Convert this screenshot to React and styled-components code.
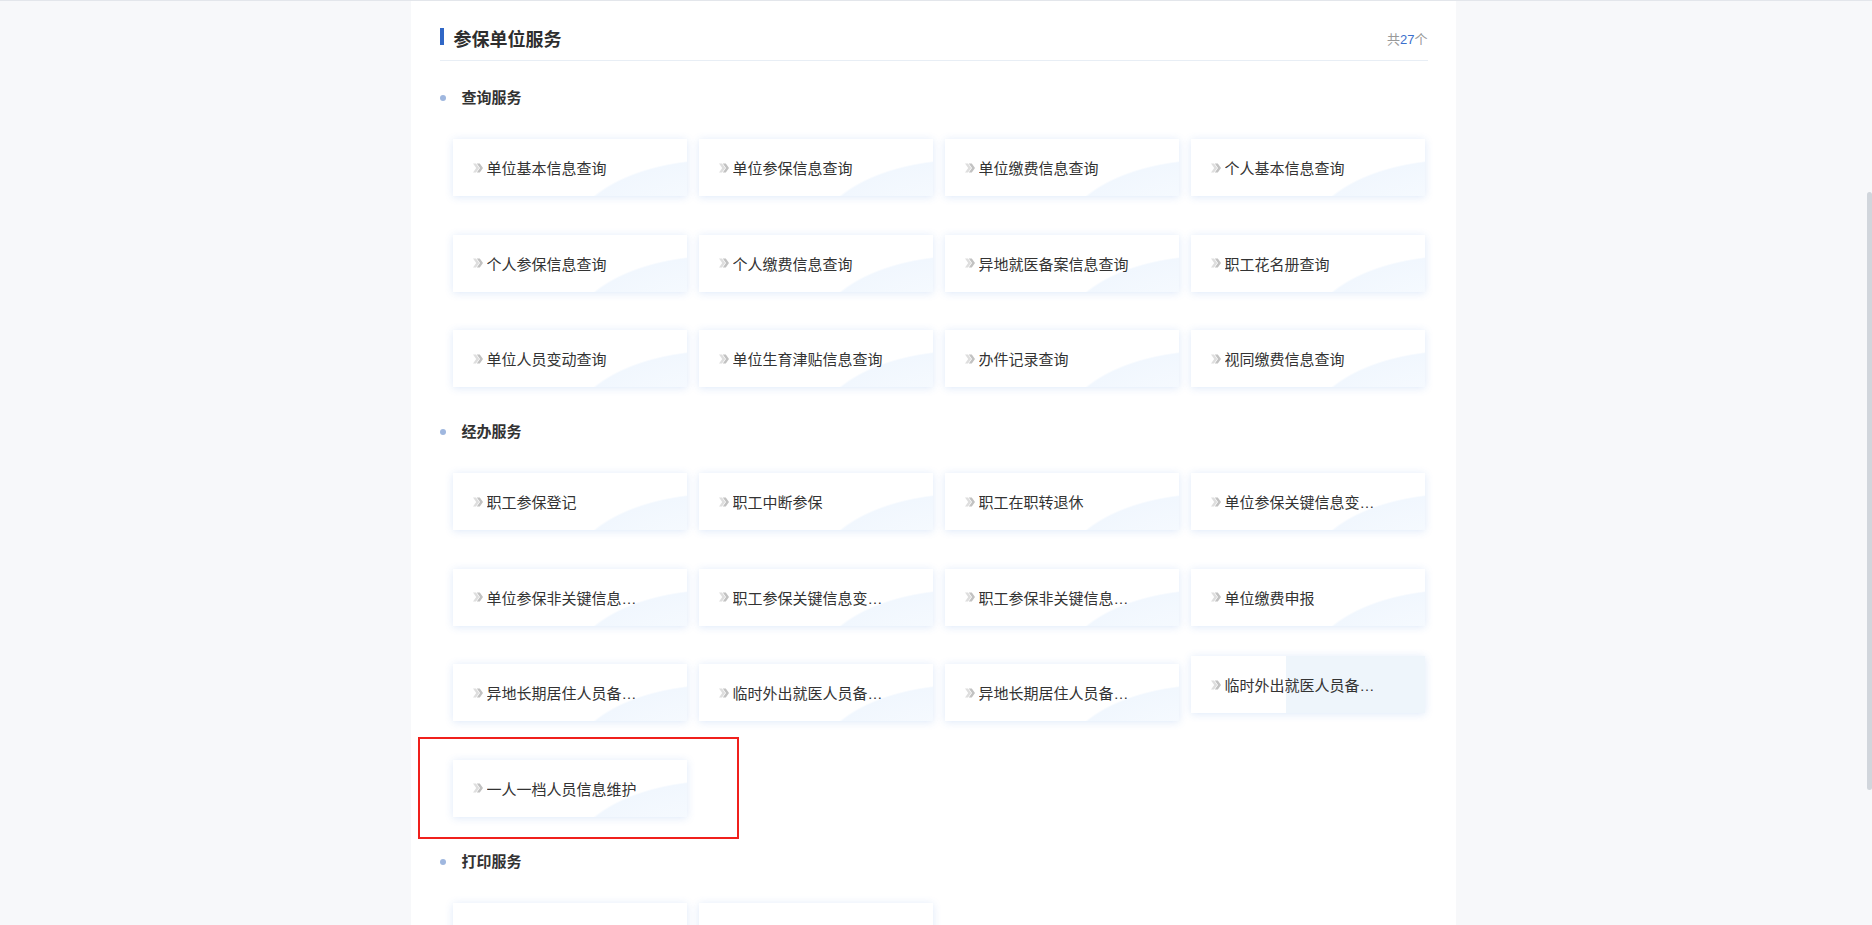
import React from "react"
import styled, { createGlobalStyle, css } from "styled-components"

const GlobalStyle = createGlobalStyle`
  html, body {
    margin: 0;
    height: 100%;
    overflow: hidden;
  }
  body {
    background: #f7f8fa;
    border-top: 1px solid #e3e6eb;
    font-family: "Liberation Sans", "Noto Sans CJK SC", sans-serif;
    color: #333;
  }
`

const Page = styled.div`
  padding-right: 6px;
`

const Panel = styled.main`
  width: 1045px;
  min-height: 100vh;
  margin: 0 auto;
  padding: 0 28px 0 29px;
  box-sizing: border-box;
  background: #fff;
`

const Header = styled.header`
  height: 60px;
  box-sizing: border-box;
  padding-top: 27px;
  display: flex;
  justify-content: space-between;
  align-items: flex-start;
  border-bottom: 1px solid #e8eef5;
`

const Title = styled.h2`
  margin: 0;
  display: flex;
  align-items: flex-start;
  gap: 10px;
  font-size: 18px;
  line-height: 24px;
  font-weight: bold;
  color: #2e2e2e;

  &::before {
    content: "";
    width: 4px;
    height: 17px;
    background: #3067c6;
    flex-shrink: 0;
  }
`

const Count = styled.span`
  font-size: 13px;
  line-height: 24px;
  color: #999;

  b {
    font-weight: normal;
    color: #3b6fcd;
  }
`

const Body = styled.div`
  padding-top: 27px;
`

const Section = styled.section`
  & + & {
    margin-top: 35px;
  }
`

const SectionTitle = styled.h3`
  margin: 0;
  display: flex;
  align-items: center;
  font-size: 15px;
  line-height: 20px;
  font-weight: bold;
  color: #333;

  &::before {
    content: "";
    width: 6px;
    height: 6px;
    border-radius: 50%;
    background: #9fb7df;
    margin-right: 16px;
  }
`

const Grid = styled.div`
  margin-top: 31px;
  padding-left: 13px;
  display: grid;
  grid-template-columns: repeat(4, 234px);
  column-gap: 12px;
  row-gap: 38.5px;
`

const Card = styled.a`
  position: relative;
  height: 57px;
  box-sizing: border-box;
  padding: 0 46px 0 20px;
  display: flex;
  align-items: center;
  gap: 4px;
  font-size: 15px;
  color: #333;
  text-decoration: none;
  cursor: pointer;
  background:
    radial-gradient(ellipse 150px 79px at 267px 99px, #fbfdff 0, #f1f7fe 98%, rgba(241, 247, 254, 0) 100%),
    #fff;
  box-shadow: 0 1px 8px rgba(55, 120, 220, 0.17);

  ${(p) =>
    p.$active &&
    css`
      transform: translateY(-8px);
      background: linear-gradient(90deg, #fff 95px, #eef5fb 95px);
    `}

  ${(p) =>
    p.$marked &&
    css`
      &::after {
        content: "";
        position: absolute;
        inset: -23px -52px -22px -35px;
        border: 2px solid #f0201c;
        pointer-events: none;
      }
    `}
`

const Label = styled.span`
  flex: 1;
  min-width: 0;
  white-space: nowrap;
  overflow: hidden;
  text-overflow: ellipsis;
`

const Scrollbar = styled.div`
  position: fixed;
  right: 0;
  top: 192px;
  width: 5px;
  height: 598px;
  border-radius: 3px;
  background: #d1d6dc;
`

const Chevrons = () => (
  <svg width="10" height="10" viewBox="0 0 10 10" style={{ flexShrink: 0 }}>
    <polygon points="0,0.5 3,0.5 6.2,5 3,9.5 0,9.5 3.2,5" fill="#dedede" />
    <polygon points="3.8,0.5 6.8,0.5 10,5 6.8,9.5 3.8,9.5 7,5" fill="#c2c2c2" />
  </svg>
)

const sections = [
  {
    title: "查询服务",
    items: [
      "单位基本信息查询",
      "单位参保信息查询",
      "单位缴费信息查询",
      "个人基本信息查询",
      "个人参保信息查询",
      "个人缴费信息查询",
      "异地就医备案信息查询",
      "职工花名册查询",
      "单位人员变动查询",
      "单位生育津贴信息查询",
      "办件记录查询",
      "视同缴费信息查询",
    ],
  },
  {
    title: "经办服务",
    items: [
      "职工参保登记",
      "职工中断参保",
      "职工在职转退休",
      "单位参保关键信息变更登记",
      "单位参保非关键信息变更",
      "职工参保关键信息变更登记",
      "职工参保非关键信息变更",
      "单位缴费申报",
      "异地长期居住人员备案登记",
      "临时外出就医人员备案登记",
      "异地长期居住人员备案变更",
      { name: "临时外出就医人员备案变更", active: true },
      { name: "一人一档人员信息维护", marked: true },
    ],
  },
  {
    title: "打印服务",
    items: ["参保证明打印", "缴费凭证打印"],
  },
]

export default function App() {
  return (
    <Page>
      <GlobalStyle />
      <Panel>
        <Header>
          <Title>参保单位服务</Title>
          <Count>
            共<b>27</b>个
          </Count>
        </Header>
        <Body>
          {sections.map((section) => (
            <Section key={section.title}>
              <SectionTitle>{section.title}</SectionTitle>
              <Grid>
                {section.items.map((item) => {
                  const entry = typeof item === "string" ? { name: item } : item
                  return (
                    <Card
                      key={entry.name}
                      title={entry.name}
                      $active={entry.active}
                      $marked={entry.marked}
                    >
                      <Chevrons />
                      <Label>{entry.name}</Label>
                    </Card>
                  )
                })}
              </Grid>
            </Section>
          ))}
        </Body>
      </Panel>
      <Scrollbar />
    </Page>
  )
}
